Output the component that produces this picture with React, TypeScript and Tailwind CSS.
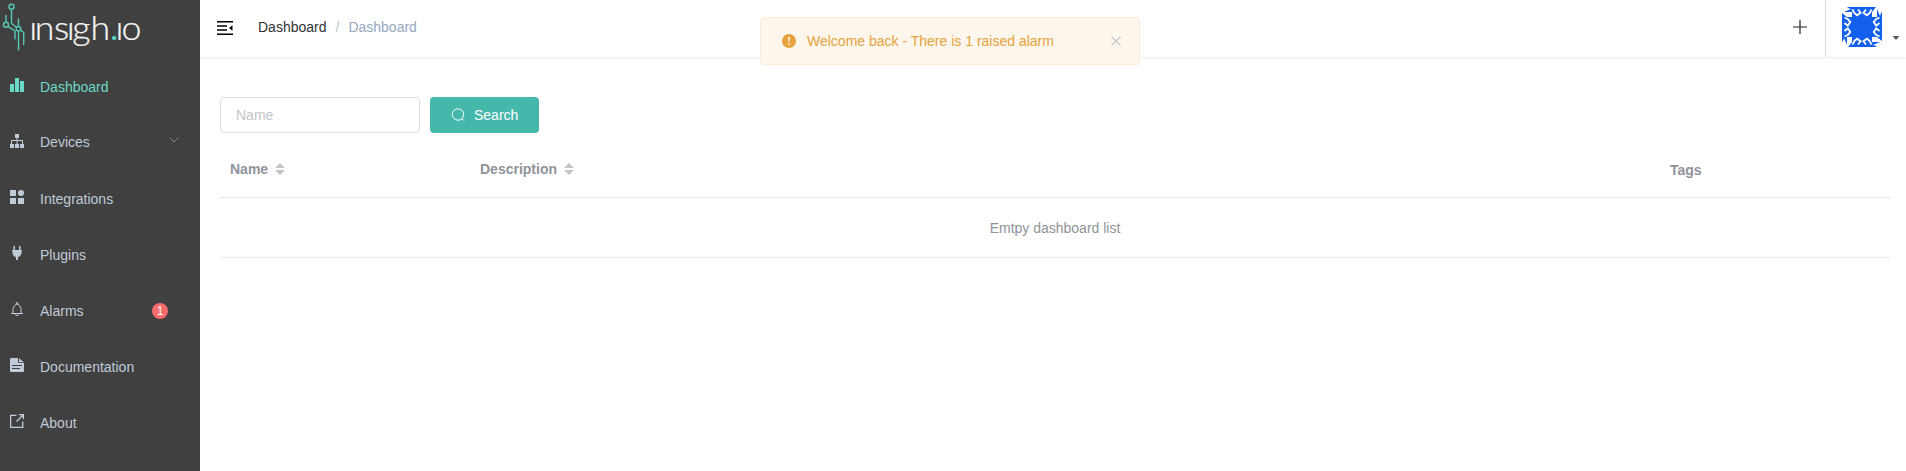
import type { ReactNode } from "react";

function Logo() {
  return (
    <svg width="150" height="56" viewBox="0 0 150 56" className="block">
      <g fill="none" stroke="#55c9b4" strokeWidth="1.4">
        <circle cx="11.5" cy="6.8" r="2.5" />
        <circle cx="6" cy="24.8" r="2.5" />
        <circle cx="18.5" cy="28.8" r="2.3" />
        <path d="M11.5 9.2V23.5L16.600 27.500M6 22.400V15M8 26.300L15 31V39.500M18.500 26.500V18.500M18.500 31V50.500M20.300 30L23.700 32.500V45" />
      </g>
      <text
        transform="scale(1.1 1)"
        x="26.5 31.5 49.1 60.7 65.7 82.3 100.6 104.9 110.4"
        y="40.2"
        fontFamily="Lato, sans-serif"
        fontWeight="300"
        fontSize="32.5"
        fill="#f4f4f4"
        stroke="#f4f4f4"
        strokeWidth="0.25"
      >
        ınsıgh<tspan fill="#55d6c2" stroke="none" fontWeight="700" fontSize="26">.</tspan>ıo
      </text>
    </svg>
  );
}

const icons: Record<string, ReactNode> = {
  dashboard: <path d="M0 6h4v8H0zM5 0h4v14H5zM10 3h4v11h-4z" />,
  devices: (
    <path d="M5 0h4v4H7.500v2H13v4h1v4h-4v-4h2V7H7.500v3H9v4H5v-4h1.500V7H2v3h2v4H0v-4h1V6h5.500V4H5z" />
  ),
  integrations: (
    <>
      <path d="M0 0h6v6H0zM0 8h6v6H0zM8 8h6v6H8z" />
      <circle cx="11" cy="3" r="3" />
    </>
  ),
  plugins: <path d="M3.500 0H5v4h4V0h1.500v4H12v1h-.5v3L10 10 8 11.200V14H6v-2.800L4 10 2.500 8V5H2V4h1.500z" />,
  alarms: (
    <g fill="none" stroke="currentColor">
      <path d="M1 11.500h12M3 11.500V6.500L4.500 3.500L7 2l2.500 1.500L11 6.500v5M5 12.200l1 1.200h2l1-1.200" />
      <circle cx="7" cy="1.300" r="0.800" />
    </g>
  ),
  documentation: (
    <path
      fillRule="evenodd"
      d="M1.200 0H8v4.800h6v8a1.200 1.200 0 0 1-1.200 1.200H1.200A1.200 1.200 0 0 1 0 12.800V1.200A1.200 1.200 0 0 1 1.200 0zM9 0.300L13.700 3.900H9zM2 7v1h10V7zM2 10v1h8v-1z"
    />
  ),
  about: (
    <g fill="none" stroke="currentColor" strokeWidth="1.300">
      <path d="M6.500 1.300H.6v12.100h12.100V7.500M6.500 7.500L13 1M9 .6h4.400V5" />
    </g>
  ),
};

type NavItemProps = { icon: string; label: string; active?: boolean; raised?: boolean; children?: ReactNode };

function NavItem({ icon, label, active, raised, children }: NavItemProps) {
  return (
    <li className={`flex h-14 items-center pl-2.5 ${active ? "text-[#6adac8]" : "text-[#bfcbd9]"}`}>
      <svg width="14" height="14" viewBox="0 0 14 14" fill="currentColor" className="mr-4 -mt-1 shrink-0">
        {icons[icon]}
      </svg>
      <span className={raised ? "-mt-0.5" : ""}>{label}</span>
      {children}
    </li>
  );
}

function Sidebar() {
  return (
    <aside className="w-[200px] shrink-0 bg-[#404040]">
      <div className="h-[59px]">
        <Logo />
      </div>
      <ul>
        <NavItem icon="dashboard" label="Dashboard" active />
        <NavItem icon="devices" label="Devices" raised>
          <svg width="10" height="6" viewBox="0 0 10 6" fill="none" stroke="#86898d" className="-mt-1.5 mr-[21px] ml-auto">
            <path d="M.5.5L5 5 9.500.5" />
          </svg>
        </NavItem>
        <NavItem icon="integrations" label="Integrations" />
        <NavItem icon="plugins" label="Plugins" />
        <NavItem icon="alarms" label="Alarms">
          <span className="mr-8 ml-auto flex size-4 items-center justify-center rounded-full bg-[#f56c6c] text-[12px] leading-none text-white">
            1
          </span>
        </NavItem>
        <NavItem icon="documentation" label="Documentation" />
        <NavItem icon="about" label="About" />
      </ul>
    </aside>
  );
}

function Avatar() {
  return (
    <svg width="40" height="40" viewBox="0 0 40 40" className="block">
      <rect width="40" height="40" fill="#1460ee" />
      {[0, 90, 180, 270].map((r) => (
        <g key={r} transform={`rotate(${r} 20 20)`}>
          <path d="M0 0h10v10H0z" fill="#fff" />
          <path d="M2 5L10 1.500V5zM5 0h5v2L7 1.500zM0 10V6L5 10z" fill="#1460ee" />
          <path
            d="M10.500 2.500L12.300 6L15 8.300L18.600 5.800L16 2.500M29.500 2.500L27.700 6L25 8.300L21.400 5.800L24 2.500"
            fill="none"
            stroke="#fff"
            strokeWidth="1.800"
          />
        </g>
      ))}
    </svg>
  );
}

function Header() {
  return (
    <header className="flex h-[57px] shrink-0 shadow-[0_1px_2px_rgba(0,0,0,0.08)]">
      <svg width="16" height="14" viewBox="0 0 16 14" className="mt-[21px] ml-[17px]">
        <path d="M0 0h16v1.600H0zM0 4.200h10v1.500H0zM0 8.300h10v1.500H0zM0 12.400h16V14H0zM15.500 4.200v5.600L12 7z" />
      </svg>
      <nav className="ml-[25px] flex h-[54px] items-center">
        <span className="text-[#303133]">Dashboard</span>
        <span className="mx-[9px] text-[#c0c4cc]">/</span>
        <span className="text-[#97a8be]">Dashboard</span>
      </nav>
      <div className="ml-auto flex">
        <svg width="14" height="14" viewBox="0 0 14 14" className="mt-5 mr-[18px]" stroke="#222" strokeWidth="1.200">
          <path d="M0 7h14M7 0v14" />
        </svg>
        <div className="flex w-[81px] border-l border-[#d8dce5] pt-[7px] pl-4">
          <Avatar />
          <svg width="8" height="5" viewBox="0 0 8 5" className="mt-[29px] ml-[10px]" fill="#5a5e66">
            <path d="M.5 0h7L4 4z" />
          </svg>
        </div>
      </div>
    </header>
  );
}

function SortCaret() {
  return (
    <svg width="10" height="12" viewBox="0 0 10 12" className="ml-[7px]" fill="#c0c4cc">
      <path d="M0 5L5 0l5 5zM0 7h10l-5 5z" />
    </svg>
  );
}

function Alert() {
  return (
    <div className="absolute top-[17px] left-[760px] flex h-12 w-[380px] items-center rounded border border-[#faecd8] bg-[#fdf6ec] pr-[18px] pl-[21px] text-[#e6a23c]">
      <svg width="14" height="14" viewBox="0 0 14 14" className="mr-[11px]">
        <circle cx="7" cy="7" r="7" fill="#e6a23c" />
        <path d="M6.100 3h1.800l-.4 5h-1z" fill="#fff" />
        <circle cx="7" cy="10.200" r=".9" fill="#fff" />
      </svg>
      <span>Welcome back - There is 1 raised alarm</span>
      <svg width="10" height="10" viewBox="0 0 10 10" className="ml-auto" stroke="#c0c4cc" strokeWidth="1.100">
        <path d="M.4.4l9.200 9.200M9.600.4L.4 9.600" />
      </svg>
    </div>
  );
}

export default function App() {
  return (
    <div className="relative flex h-[471px] bg-white font-['Liberation_Sans',Arial,sans-serif] text-[14px] leading-4">
      <Sidebar />
      <div className="flex min-w-0 grow flex-col">
        <Header />
        <main className="px-4 pt-10 pl-5">
          <div className="flex gap-2.5">
            <input
              placeholder="Name"
              className="h-9 w-[200px] rounded border border-[#dcdfe6] px-[15px] outline-none placeholder:text-[#c0c4cc]"
            />
            <button className="flex h-9 w-[109px] items-center rounded bg-[#45b8ac] pl-[21px] text-white">
              <svg width="14" height="14" viewBox="0 0 14 14" fill="none" stroke="#fff" className="mr-[9px]">
                <circle cx="7" cy="6.500" r="5.700" />
                <path d="M10.800 10.500l2 2" />
              </svg>
              Search
            </button>
          </div>
          <div className="flex h-[65px] items-center border-b border-[#e2e5ec] pt-[9px] pb-0.5 font-bold text-[#909399]">
            <div className="flex w-[250px] items-center pl-2.5">
              Name
              <SortCaret />
            </div>
            <div className="flex grow items-center pl-2.5">
              Description
              <SortCaret />
            </div>
            <div className="w-[230px] pt-0.5 pl-2.5">Tags</div>
          </div>
          <div className="flex h-[60px] items-center justify-center border-b border-[#e8eaf2] text-[#909399]">Emtpy dashboard list</div>
        </main>
      </div>
      <Alert />
    </div>
  );
}
